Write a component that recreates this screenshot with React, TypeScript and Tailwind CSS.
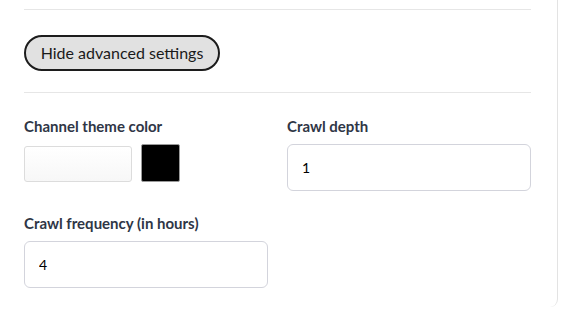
export default function App() {
  return (
    <div className="w-[564px] h-[311px] bg-white overflow-hidden" style={{ fontFamily: "Lato, 'Open Sans', sans-serif" }}>
      <div className="w-[558px] h-[307px] border-r border-[#e3e3e3] rounded-br-[8px] pl-6 pr-[26px]">
        <div className="h-[10px] border-b border-[#e6e6e6]" />
        <div className="pt-[25px] pb-[21px] border-b border-[#e6e6e6]">
          <button
            type="button"
            className="h-9 w-[196px] rounded-full border-2 border-[#1c1c1c] bg-[#e1e1e1] text-[16px] text-[#1a1a1a]"
          >
            Hide advanced settings
          </button>
        </div>
        <div className="grid grid-cols-2 gap-x-[19px] pt-[23px]">
          <div className="flex flex-col">
            <label className="text-[15px] font-bold text-[#2f3646] leading-[20px]">Channel theme color</label>
            <div className="flex gap-[9px] mt-2 h-[47px] items-start">
              <input
                readOnly
                className="mt-[2px] w-[108px] h-[36px] rounded-[3px] border border-[#dcdcdc] bg-gradient-to-b from-white to-[#f7f7f7] outline-none"
              />
              <div className="w-[39px] h-[38px] bg-black border border-[#9a9a9a] rounded-[2px]" />
            </div>
          </div>
          <div className="flex flex-col">
            <label className="text-[15px] font-bold text-[#2f3646] leading-[20px]">Crawl depth</label>
            <input
              readOnly
              value="1"
              className="mt-2 h-[47px] w-full rounded-[6px] border border-[#d3d4dc] px-[14px] text-[14px] text-black outline-none"
            />
          </div>
          <div className="flex flex-col mt-[22px]">
            <label className="text-[15px] font-bold text-[#2f3646] leading-[20px]">Crawl frequency (in hours)</label>
            <input
              readOnly
              value="4"
              className="mt-2 h-[47px] w-full rounded-[6px] border border-[#d3d4dc] px-[14px] text-[14px] text-black outline-none"
            />
          </div>
        </div>
      </div>
    </div>
  );
}
